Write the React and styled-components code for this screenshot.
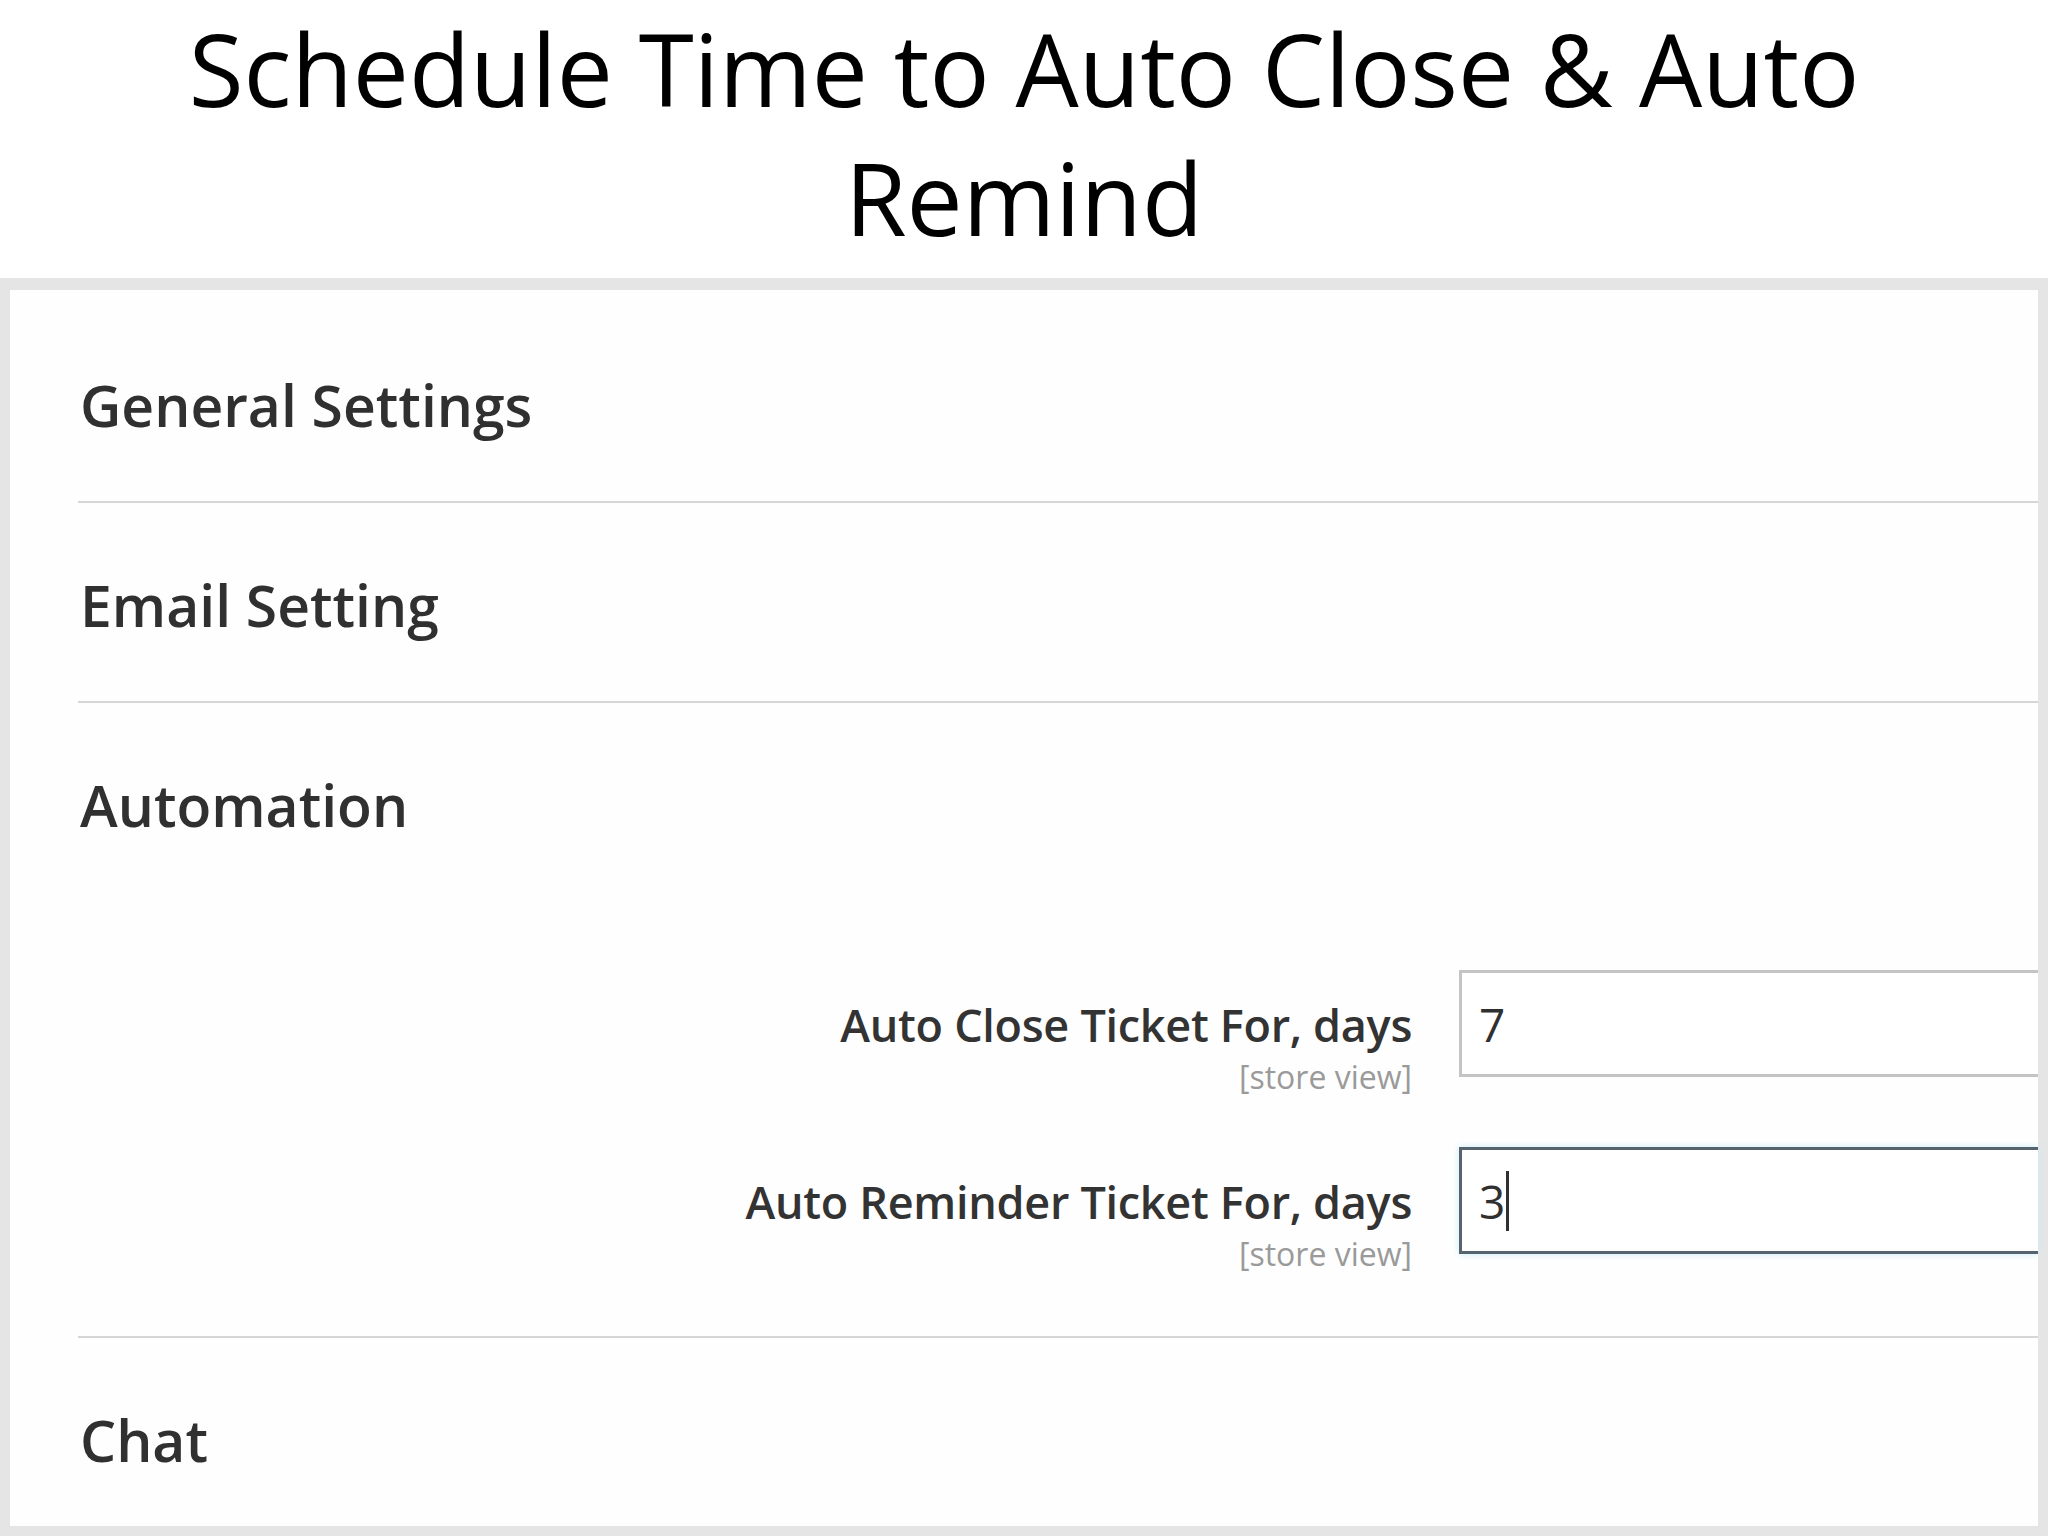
import React from "react";
import styled, { createGlobalStyle } from "styled-components";

const GlobalStyle = createGlobalStyle`
  html, body {
    margin: 0;
    padding: 0;
    background: #ffffff;
  }
  body {
    font-family: "Open Sans", "Noto Sans", sans-serif;
    color: #303030;
  }
`;

const Page = styled.div`
  width: 2048px;
  height: 1536px;
  overflow: hidden;
  display: flex;
  flex-direction: column;
`;

const Title = styled.h1`
  margin: 0 0 16px;
  padding: 4px 180px 0;
  font-family: "Open Sans", "Noto Sans", sans-serif;
  font-weight: 400;
  font-size: 100px;
  line-height: 129px;
  text-align: center;
  color: #000;
`;

const Panel = styled.div`
  flex: 1;
  display: flex;
  flex-direction: column;
  border-style: solid;
  border-color: #e5e5e5;
  border-width: 12px 10px 10px 10px;
  background: #fefefe;
  padding-top: 13px;
`;

const Section = styled.section`
  box-sizing: border-box;
  margin-left: 68px;
  padding-top: 64px;
  min-height: ${({ $height }) => ($height ? `${$height}px` : "auto")};
  padding-bottom: ${({ $bottom }) => ($bottom ? `${$bottom}px` : "0")};
  border-bottom: ${({ $last }) => ($last ? "none" : "2px solid #d6d6d6")};
  flex: ${({ $last }) => ($last ? 1 : "none")};
`;

const Heading = styled.h2`
  margin: 0;
  font-size: 57px;
  font-weight: 600;
  line-height: 76px;
  color: #303030;
  padding-left: 2px;
`;

const Fields = styled.div`
  margin-top: 127px;
  display: flex;
  flex-direction: column;
  gap: 52px;
`;

const FieldRow = styled.div`
  display: grid;
  grid-template-columns: 1fr 579px;
  column-gap: 47px;
  align-items: start;
`;

const LabelBlock = styled.div`
  text-align: right;
  padding-top: 30px;
`;

const Label = styled.div`
  font-size: 45px;
  font-weight: 600;
  line-height: 50px;
  color: #333;
  letter-spacing: -0.3px;
`;

const Scope = styled.div`
  margin-top: 9px;
  font-size: 32px;
  line-height: 36px;
  color: #9a9a9a;
`;

const InputBox = styled.div`
  box-sizing: border-box;
  height: 107px;
  display: flex;
  align-items: center;
  padding-left: 17px;
  background: #fff;
  border: 3px solid ${({ $focused }) => ($focused ? "#55646e" : "#c4c4c4")};
  border-right: none;
  box-shadow: ${({ $focused }) => ($focused ? "0 0 7px #c9ecf7" : "none")};
  font-size: 46px;
  color: #303030;
`;

const Caret = styled.span`
  display: inline-block;
  width: 3px;
  height: 60px;
  margin-left: 1px;
  background: #303030;
`;

const fields = [
  { label: "Auto Close Ticket For, days", value: "7" },
  { label: "Auto Reminder Ticket For, days", value: "3", focused: true },
];

const App = () => {
  return (
    <Page>
      <GlobalStyle />
      <Title>Schedule Time to Auto Close &amp; Auto Remind</Title>
      <Panel>
        <Section $height={200}>
          <Heading>General Settings</Heading>
        </Section>
        <Section $height={200}>
          <Heading>Email Setting</Heading>
        </Section>
        <Section $bottom={64}>
          <Heading>Automation</Heading>
          <Fields>
            {fields.map(field => (
              <FieldRow key={field.label}>
                <LabelBlock>
                  <Label>{field.label}</Label>
                  <Scope>[store view]</Scope>
                </LabelBlock>
                <InputBox $focused={field.focused}>
                  {field.value}
                  {field.focused && <Caret />}
                </InputBox>
              </FieldRow>
            ))}
          </Fields>
        </Section>
        <Section $last>
          <Heading>Chat</Heading>
        </Section>
      </Panel>
    </Page>
  );
};

export default App;
